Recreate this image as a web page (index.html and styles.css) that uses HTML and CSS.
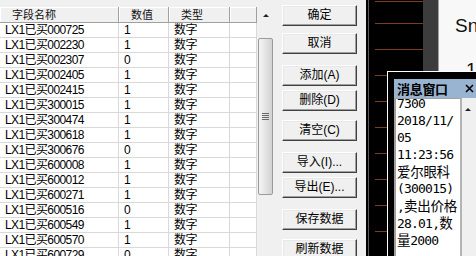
FILE: index.html
```html
<!DOCTYPE html>
<html>
<head>
<meta charset="utf-8">
<link rel="stylesheet" href="styles.css">
</head>
<body>
<div class="screen">
  <div class="panel">
    <div class="list">
      <div class="table">
        <div class="hd">字段名称</div><div class="hd">数值</div><div class="hd">类型</div><div class="hd"></div>
        <div class="c">LX1已买000725</div><div class="c">1</div><div class="c">数字</div><div class="c"></div>
        <div class="c">LX1已买002230</div><div class="c">1</div><div class="c">数字</div><div class="c"></div>
        <div class="c">LX1已买002307</div><div class="c">0</div><div class="c">数字</div><div class="c"></div>
        <div class="c">LX1已买002405</div><div class="c">1</div><div class="c">数字</div><div class="c"></div>
        <div class="c">LX1已买002415</div><div class="c">1</div><div class="c">数字</div><div class="c"></div>
        <div class="c">LX1已买300015</div><div class="c">1</div><div class="c">数字</div><div class="c"></div>
        <div class="c">LX1已买300474</div><div class="c">1</div><div class="c">数字</div><div class="c"></div>
        <div class="c">LX1已买300618</div><div class="c">1</div><div class="c">数字</div><div class="c"></div>
        <div class="c">LX1已买300676</div><div class="c">0</div><div class="c">数字</div><div class="c"></div>
        <div class="c">LX1已买600008</div><div class="c">1</div><div class="c">数字</div><div class="c"></div>
        <div class="c">LX1已买600012</div><div class="c">1</div><div class="c">数字</div><div class="c"></div>
        <div class="c">LX1已买600271</div><div class="c">1</div><div class="c">数字</div><div class="c"></div>
        <div class="c">LX1已买600516</div><div class="c">0</div><div class="c">数字</div><div class="c"></div>
        <div class="c">LX1已买600549</div><div class="c">1</div><div class="c">数字</div><div class="c"></div>
        <div class="c">LX1已买600570</div><div class="c">1</div><div class="c">数字</div><div class="c"></div>
        <div class="c">LX1已买600729</div><div class="c">0</div><div class="c">数字</div><div class="c"></div>
      </div>
      <div class="vscroll">
        <div class="arrow"><span class="tri"></span></div>
        <div class="thumb"><span class="grip"></span></div>
      </div>
    </div>
    <div class="btns">
      <div class="btn g5">确定</div>
      <div class="btn g7">取消</div>
      <div class="btn g11">添加(A)</div>
      <div class="btn g4">删除(D)</div>
      <div class="btn g9">清空(C)</div>
      <div class="btn g11">导入(I)...</div>
      <div class="btn g4">导出(E)...</div>
      <div class="btn g11">保存数据</div>
      <div class="btn g9">刷新数据</div>
    </div>
  </div>
  <div class="chart">
    <div class="plot"><span class="axis"></span><span class="grid"></span></div>
    <div class="edge"></div>
  </div>
  <div class="side">
    <div class="big">Sn</div>
    <div class="big one">1</div>
  </div>
  <div class="msgwin">
    <div class="title">
      <span class="ttext">消息窗口</span>
      <svg class="close" width="9" height="9" viewBox="0 0 9 9"><path d="M1 1L8 8M8 1L1 8" stroke="#000" stroke-width="1.6" fill="none"/></svg>
    </div>
    <div class="mbody">
      <div class="mtext">
        <div class="ln first">7300</div>
        <div class="ln">2018/11/</div>
        <div class="ln">05</div>
        <div class="ln">11:23:56</div>
        <div class="ln"><span class="cj">爱尔眼科</span></div>
        <div class="ln">(300015)</div>
        <div class="ln">,<span class="cj">卖出价格</span></div>
        <div class="ln">28.01,<span class="cj">数</span></div>
        <div class="ln"><span class="cj">量</span>2000</div>
      </div>
      <div class="mscroll"><span class="tri"></span></div>
    </div>
  </div>
</div>
</body>
</html>
```

FILE: styles.css
```css
* { box-sizing: border-box; }
html, body { margin: 0; padding: 0; }
body {
  width: 476px;
  height: 256px;
  overflow: hidden;
  background: #f0f0f0;
  font-family: "Liberation Sans", "Noto Sans CJK SC", sans-serif;
  font-size: 12px;
  color: #000;
}
.screen {
  position: relative;
  display: flex;
  width: 476px;
  height: 256px;
  overflow: hidden;
}
.panel {
  display: flex;
  width: 366px;
  height: 256px;
  background: #f0f0f0;
}
.list {
  display: flex;
  margin-top: 7px;
  height: 249px;
  width: 274px;
}
.table {
  display: grid;
  grid-template-columns: 119px 50px 61px 27px;
  grid-template-rows: 16px;
  grid-auto-rows: 15px;
  align-content: start;
  width: 257px;
  height: 249px;
  overflow: hidden;
  background: #fff;
}
.hd {
  background: #f0f0f0;
  border-right: 1px solid #a0a0a0;
  border-bottom: 1px solid #a0a0a0;
  box-shadow: inset 1px 1px 0 #fff;
  font-family: "Noto Sans CJK SC", sans-serif;
  font-size: 11px;
  line-height: 15px;
  padding-left: 12px;
  color: #111;
}
.c {
  border-right: 1px solid #d9d9d9;
  border-bottom: 1px solid #d9d9d9;
  padding-left: 5px;
  line-height: 14px;
  letter-spacing: -0.6px;
  white-space: nowrap;
  overflow: hidden;
}
.vscroll {
  width: 17px;
  height: 249px;
  background: #f0f0f0;
  display: flex;
  flex-direction: column;
  align-items: center;
}
.arrow {
  width: 17px;
  height: 17px;
  display: flex;
  align-items: center;
  justify-content: center;
}
.tri {
  display: block;
  width: 0;
  height: 0;
  border-left: 3px solid transparent;
  border-right: 3px solid transparent;
  border-bottom: 3px solid #222;
}
.thumb {
  margin-top: 14px;
  width: 15px;
  height: 157px;
  border: 1px solid #9a9a9a;
  border-radius: 2px;
  background: linear-gradient(to right, #f4f4f4 0%, #e6e6e6 45%, #d2d2d2 100%);
  display: flex;
  align-items: center;
  justify-content: center;
}
.grip {
  display: block;
  width: 7px;
  height: 7px;
  background: repeating-linear-gradient(to bottom, #6a6a6a 0 1px, transparent 1px 2px);
}
.btns {
  display: flex;
  flex-direction: column;
  margin-left: 8px;
  width: 75px;
}
.btn {
  height: 21px;
  border: 1px solid;
  border-color: #fff #404040 #404040 #fff;
  box-shadow: inset -1px -1px 0 #a0a0a0, inset 1px 1px 0 #e8e8e8;
  background: #f0f0f0;
  text-align: center;
  line-height: 19px;
  font-size: 12px;
  white-space: nowrap;
}
.g4 { margin-top: 4px; }
.g5 { margin-top: 5px; }
.g7 { margin-top: 7px; }
.g9 { margin-top: 9px; }
.g11 { margin-top: 11px; }
.chart {
  display: flex;
  width: 72px;
  height: 256px;
}
.plot {
  display: flex;
  width: 57px;
  background: #000;
  padding-left: 2px;
}
.axis {
  display: block;
  width: 1px;
  background: #5a5a5a;
}
.grid {
  display: block;
  flex: 1;
  margin-left: 6px;
  background: repeating-linear-gradient(to bottom, #7e3b1d 0 1px, transparent 1px 26px);
  background-position: 0 23px;
}
.edge {
  width: 15px;
  background: #3c3c3c;
}
.side {
  width: 38px;
  height: 256px;
  background: #f8f8f8;
  border-left: 1px solid #a0a0a0;
  padding-left: 16px;
  padding-top: 16px;
}
.big {
  font-family: "Liberation Sans", sans-serif;
  font-size: 19px;
  line-height: 19px;
  color: #111;
  white-space: nowrap;
}
.one {
  margin-top: 25px;
  margin-left: 11px;
}
.msgwin {
  position: absolute;
  left: 387px;
  top: 71px;
  width: 89px;
  height: 185px;
  border-left: 1px solid #fff;
  border-top: 1px solid #fff;
  background: #000;
  padding: 7px 0 0 6px;
  display: flex;
  flex-direction: column;
}
.title {
  height: 19px;
  background: #99b4d1;
  display: flex;
  align-items: center;
  justify-content: space-between;
  padding-left: 3px;
  padding-right: 2px;
  flex: none;
}
.ttext {
  font-family: "Noto Sans CJK SC", sans-serif;
  font-weight: bold;
  font-size: 13px;
  line-height: 19px;
  letter-spacing: -0.3px;
}
.close { display: block; }
.mbody {
  display: flex;
  flex: 1;
  min-height: 0;
}
.mtext {
  width: 68px;
  background: #fff;
  border-left: 2px solid #a0a0a0;
  border-right: 2px solid #b4b4b4;
  border-top: 1px solid #a0a0a0;
  padding-left: 1px;
  overflow: hidden;
  font-family: "DejaVu Sans Mono", monospace;
  font-size: 13px;
  letter-spacing: -0.8px;
  color: #000;
}
.ln {
  height: 17px;
  line-height: 17px;
  white-space: nowrap;
}
.first { margin-top: -4px; }
.cj {
  font-family: "Noto Sans CJK SC", sans-serif;
  font-size: 13.5px;
  letter-spacing: -0.3px;
}
.mscroll {
  flex: 1;
  background: #f0f0f0;
  display: flex;
  justify-content: center;
  padding-top: 10px;
}
.mscroll .tri { margin-left: -2px; }
```
